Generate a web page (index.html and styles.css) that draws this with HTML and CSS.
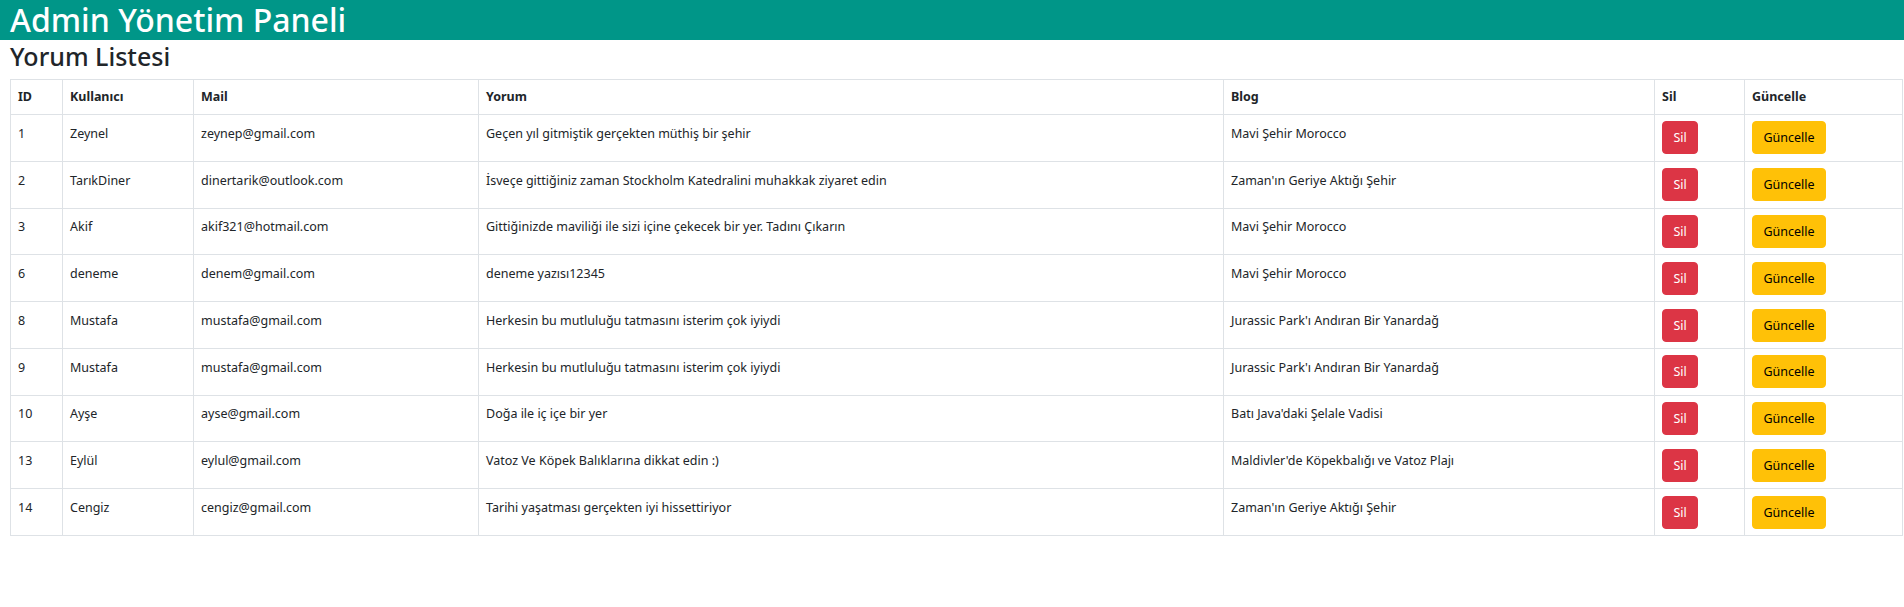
FILE: index.html
```html
<!DOCTYPE html>
<html lang="tr">
<head>
<meta charset="utf-8">
<title>Admin Yönetim Paneli</title>
<link rel="stylesheet" href="styles.css">
</head>
<body>
<h1 class="topbar">Admin Yönetim Paneli</h1>
<div class="container">
  <h2 class="page-title">Yorum Listesi</h2>
  <table class="grid">
    <colgroup>
      <col class="c-id"><col class="c-user"><col class="c-mail"><col class="c-text"><col class="c-blog"><col class="c-del"><col class="c-upd">
    </colgroup>
    <thead>
      <tr><th>ID</th><th>Kullanıcı</th><th>Mail</th><th>Yorum</th><th>Blog</th><th>Sil</th><th>Güncelle</th></tr>
    </thead>
    <tbody>
      <tr><td>1</td><td>Zeynel</td><td>zeynep@gmail.com</td><td>Geçen yıl gitmiştik gerçekten müthiş bir şehir</td><td>Mavi Şehir Morocco</td><td class="act"><a class="btn btn-red">Sil</a></td><td class="act"><a class="btn btn-yellow">Güncelle</a></td></tr>
      <tr><td>2</td><td>TarıkDiner</td><td>dinertarik@outlook.com</td><td>İsveçe gittiğiniz zaman Stockholm Katedralini muhakkak ziyaret edin</td><td>Zaman'ın Geriye Aktığı Şehir</td><td class="act"><a class="btn btn-red">Sil</a></td><td class="act"><a class="btn btn-yellow">Güncelle</a></td></tr>
      <tr><td>3</td><td>Akif</td><td>akif321@hotmail.com</td><td>Gittiğinizde maviliği ile sizi içine çekecek bir yer. Tadını Çıkarın</td><td>Mavi Şehir Morocco</td><td class="act"><a class="btn btn-red">Sil</a></td><td class="act"><a class="btn btn-yellow">Güncelle</a></td></tr>
      <tr><td>6</td><td>deneme</td><td>denem@gmail.com</td><td>deneme yazısı12345</td><td>Mavi Şehir Morocco</td><td class="act"><a class="btn btn-red">Sil</a></td><td class="act"><a class="btn btn-yellow">Güncelle</a></td></tr>
      <tr><td>8</td><td>Mustafa</td><td>mustafa@gmail.com</td><td>Herkesin bu mutluluğu tatmasını isterim çok iyiydi</td><td>Jurassic Park'ı Andıran Bir Yanardağ</td><td class="act"><a class="btn btn-red">Sil</a></td><td class="act"><a class="btn btn-yellow">Güncelle</a></td></tr>
      <tr><td>9</td><td>Mustafa</td><td>mustafa@gmail.com</td><td>Herkesin bu mutluluğu tatmasını isterim çok iyiydi</td><td>Jurassic Park'ı Andıran Bir Yanardağ</td><td class="act"><a class="btn btn-red">Sil</a></td><td class="act"><a class="btn btn-yellow">Güncelle</a></td></tr>
      <tr><td>10</td><td>Ayşe</td><td>ayse@gmail.com</td><td>Doğa ile iç içe bir yer</td><td>Batı Java'daki Şelale Vadisi</td><td class="act"><a class="btn btn-red">Sil</a></td><td class="act"><a class="btn btn-yellow">Güncelle</a></td></tr>
      <tr><td>13</td><td>Eylül</td><td>eylul@gmail.com</td><td>Vatoz Ve Köpek Balıklarına dikkat edin :)</td><td>Maldivler'de Köpekbalığı ve Vatoz Plajı</td><td class="act"><a class="btn btn-red">Sil</a></td><td class="act"><a class="btn btn-yellow">Güncelle</a></td></tr>
      <tr><td>14</td><td>Cengiz</td><td>cengiz@gmail.com</td><td>Tarihi yaşatması gerçekten iyi hissettiriyor</td><td>Zaman'ın Geriye Aktığı Şehir</td><td class="act"><a class="btn btn-red">Sil</a></td><td class="act"><a class="btn btn-yellow">Güncelle</a></td></tr>
    </tbody>
  </table>
</div>
</body>
</html>
```
FILE: styles.css
```css
html, body {
  margin: 0;
  padding: 0;
  background: #fff;
}
body {
  font-family: "Noto Sans", "Open Sans", sans-serif;
  font-size: 12.5px;
  line-height: 20px;
  color: #212529;
}
.topbar {
  margin: 0;
  padding: 0 0 0 10px;
  background: #009688;
  color: #fff;
  font-size: 32px;
  font-weight: 500;
  line-height: 40px;
  height: 40px;
}
.container {
  padding: 0 0 0 10px;
}
.page-title {
  margin: 0 0 7px 0;
  font-size: 25px;
  font-weight: 500;
  line-height: 32px;
}
.grid {
  border-collapse: collapse;
  table-layout: fixed;
  width: 1892px;
}
.c-id { width: 52px; }
.c-user { width: 131px; }
.c-mail { width: 285px; }
.c-text { width: 745px; }
.c-blog { width: 431px; }
.c-del { width: 90px; }
.c-upd { width: 158px; }
.grid th,
.grid td {
  border: 1px solid #dee2e6;
  padding: 8.8px 7px 4px;
  text-align: left;
  vertical-align: top;
  white-space: nowrap;
}
.grid td.act {
  padding-top: 6.4px;
  padding-bottom: 6.4px;
}
.grid th {
  font-weight: 700;
  padding-top: 7px;
  padding-bottom: 7px;
}
.btn {
  display: inline-block;
  box-sizing: border-box;
  height: 33px;
  padding: 5px 10.5px;
  border: 1px solid transparent;
  border-radius: 4px;
  line-height: 21px;
  font-size: 12.5px;
  cursor: pointer;
}
.btn-red {
  background: #dc3545;
  border-color: #dc3545;
  color: #fff;
}
.btn-yellow {
  background: #ffc107;
  border-color: #ffc107;
  color: #000;
}
```
